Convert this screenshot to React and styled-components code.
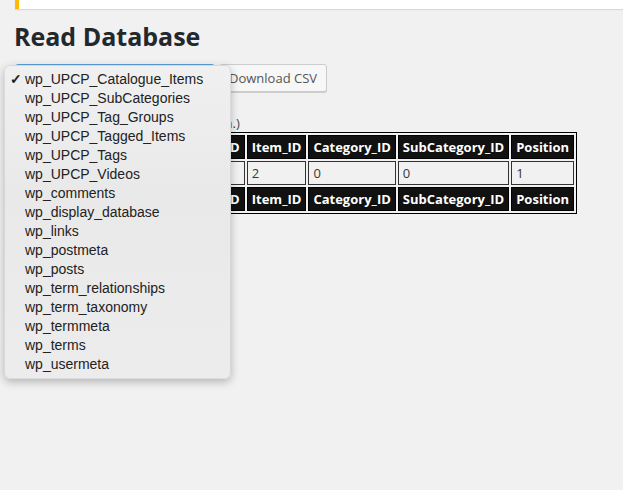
import React from "react";
import styled, { createGlobalStyle } from "styled-components";

const GlobalStyle = createGlobalStyle`
  html, body {
    margin: 0;
    padding: 0;
    background: #f1f1f1;
    font-family: "Open Sans", sans-serif;
    color: #23282d;
  }
`;

const Page = styled.div`
  position: relative;
  width: 623px;
  height: 490px;
  overflow: hidden;
  background: #f1f1f1;
`;

const Notice = styled.div`
  margin-left: 15px;
  height: 9px;
  background: #fff;
  border-left: 4px solid #ffb900;
  box-shadow: 0 1px 1px rgba(0, 0, 0, 0.1);
`;

const Wrap = styled.div`
  padding: 0 15px;
`;

const Title = styled.h1`
  margin: 10px 0 0 -1px;
  font-size: 25px;
  font-weight: 700;
  line-height: 34px;
  color: #23282d;
`;

const Controls = styled.div`
  display: flex;
  gap: 4px;
  margin-top: 11px;
`;

const Select = styled.div`
  width: 200px;
  height: 28px;
  box-sizing: border-box;
  border: 1px solid #5b9dd9;
  border-radius: 3px;
  background: #fff;
`;

const Button = styled.button`
  height: 28px;
  padding: 0 9px;
  border: 1px solid #ccc;
  border-radius: 3px;
  background: #f7f7f7;
  box-shadow: 0 1px 0 #ccc;
  font-family: "Open Sans", sans-serif;
  font-size: 13px;
  color: #555;
`;

const Hint = styled.p`
  margin: 22px 0 0;
  font-size: 13px;
  line-height: 18px;
  color: #444;
`;

const Table = styled.table`
  border: 1px solid #000;
  border-spacing: 2px;
  font-size: 13px;
`;

const Th = styled.th`
  background: #111;
  color: #fff;
  font-weight: 700;
  padding: 2px 4px;
  line-height: 18px;
  border: 1px solid #000;
`;

const Td = styled.td`
  padding: 2px 4px;
  line-height: 18px;
  border: 1px solid #333;
  color: #32373c;
`;

const Menu = styled.ul`
  position: absolute;
  left: 4px;
  top: 65px;
  width: 227px;
  margin: 0;
  padding: 4px 0;
  list-style: none;
  box-sizing: border-box;
  border-radius: 6px;
  background: linear-gradient(#f0f0f0, #e9e9e9 40%, #ececec);
  border: 1px solid rgba(0, 0, 0, 0.08);
  box-shadow: 0 3px 9px rgba(0, 0, 0, 0.25);
  font-family: "Liberation Sans", Arial, sans-serif;
  font-size: 14px;
  color: #222;
`;

const Item = styled.li`
  position: relative;
  height: 19px;
  line-height: 19px;
  padding-left: 20px;
`;

const Check = styled.span`
  position: absolute;
  left: 5px;
  top: 0;
  font-size: 14px;
  font-weight: 700;
`;

const columns = [
  "Catalogue_Item_ID",
  "Catalogue_ID",
  "Item_ID",
  "Category_ID",
  "SubCategory_ID",
  "Position",
];
const row = ["1", "1", "2", "0", "0", "1"];

const tables = [
  "wp_UPCP_Catalogue_Items",
  "wp_UPCP_SubCategories",
  "wp_UPCP_Tag_Groups",
  "wp_UPCP_Tagged_Items",
  "wp_UPCP_Tags",
  "wp_UPCP_Videos",
  "wp_comments",
  "wp_display_database",
  "wp_links",
  "wp_postmeta",
  "wp_posts",
  "wp_term_relationships",
  "wp_term_taxonomy",
  "wp_termmeta",
  "wp_terms",
  "wp_usermeta",
];

export default function App() {
  return (
    <Page>
      <GlobalStyle />
      <Notice />
      <Wrap>
        <Title>Read Database</Title>
        <Controls>
          <Select />
          <Button>Download CSV</Button>
        </Controls>
        <Hint>(Click on a header to sort by column.)</Hint>
        <Table>
          <thead>
            <tr>
              {columns.map((c) => (
                <Th key={c}>{c}</Th>
              ))}
            </tr>
          </thead>
          <tbody>
            <tr>
              {row.map((v, i) => (
                <Td key={i}>{v}</Td>
              ))}
            </tr>
          </tbody>
          <tfoot>
            <tr>
              {columns.map((c) => (
                <Th key={c}>{c}</Th>
              ))}
            </tr>
          </tfoot>
        </Table>
      </Wrap>
      <Menu>
        {tables.map((t, i) => (
          <Item key={t}>
            {i === 0 && <Check>✓</Check>}
            {t}
          </Item>
        ))}
      </Menu>
    </Page>
  );
}
